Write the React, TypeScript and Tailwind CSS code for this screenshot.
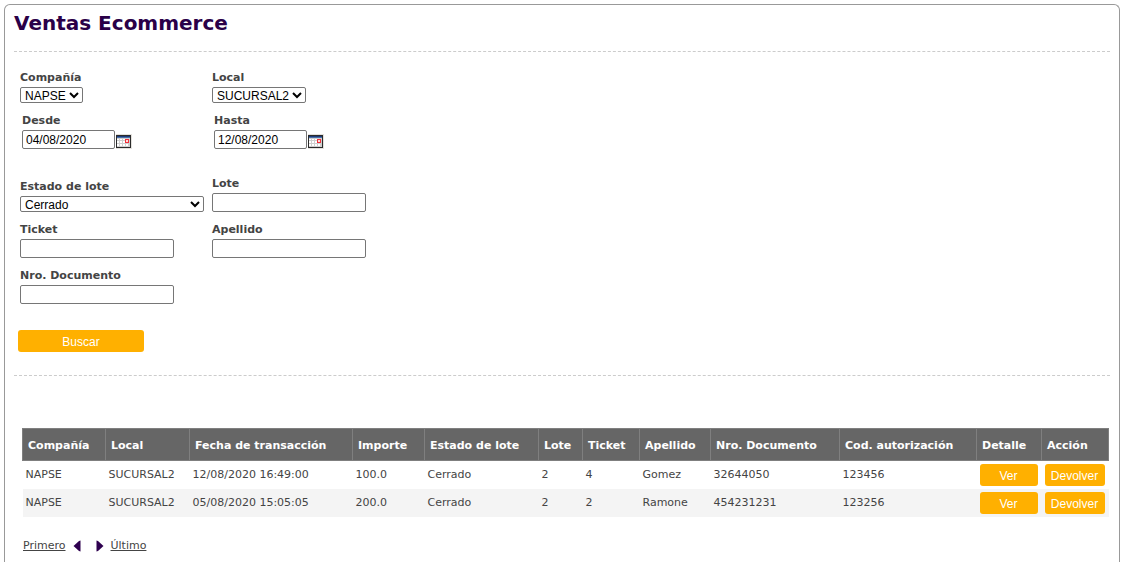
import { useId } from "react";
import type { ReactNode } from "react";
import { clsx } from "clsx";

type Sale = {
  company: string;
  store: string;
  date: string;
  amount: string;
  status: string;
  batch: string;
  ticket: string;
  lastName: string;
  document: string;
  authCode: string;
};

const sales: Sale[] = [
  {
    company: "NAPSE",
    store: "SUCURSAL2",
    date: "12/08/2020 16:49:00",
    amount: "100.0",
    status: "Cerrado",
    batch: "2",
    ticket: "4",
    lastName: "Gomez",
    document: "32644050",
    authCode: "123456",
  },
  {
    company: "NAPSE",
    store: "SUCURSAL2",
    date: "05/08/2020 15:05:05",
    amount: "200.0",
    status: "Cerrado",
    batch: "2",
    ticket: "2",
    lastName: "Ramone",
    document: "454231231",
    authCode: "123256",
  },
];

const columns = [
  { title: "Compañía", width: "w-[83px]" },
  { title: "Local", width: "w-[84px]" },
  { title: "Fecha de transacción", width: "w-[163px]" },
  { title: "Importe", width: "w-[72px]" },
  { title: "Estado de lote", width: "w-[114px]" },
  { title: "Lote", width: "w-[44px]" },
  { title: "Ticket", width: "w-[57px]" },
  { title: "Apellido", width: "w-[71px]" },
  { title: "Nro. Documento", width: "w-[129px]" },
  { title: "Cod. autorización", width: "w-[137px]" },
  { title: "Detalle", width: "w-[65px]" },
  { title: "Acción", width: "w-[67px]" },
];

const controlClass =
  "rounded-[2px] border border-[#767676] bg-white font-['Liberation_Sans',Arial,sans-serif] text-xs text-black";

function Field({ id, label, children }: { id: string; label: string; children: ReactNode }) {
  return (
    <div className="flex flex-col items-start gap-px">
      <label htmlFor={id} className="text-[11px] leading-4 font-bold">
        {label}
      </label>
      {children}
    </div>
  );
}

function SelectField({ label, value, width }: { label: string; value: string; width: string }) {
  const id = useId();
  return (
    <Field id={id} label={label}>
      <select
        id={id}
        defaultValue={value}
        className={clsx(controlClass, "h-4 pb-0.5 leading-3", width)}
      >
        <option>{value}</option>
      </select>
    </Field>
  );
}

function TextField({ label }: { label: string }) {
  const id = useId();
  return (
    <Field id={id} label={label}>
      <input id={id} type="text" className={clsx(controlClass, "h-[19px] w-[154px] px-[3px]")} />
    </Field>
  );
}

function DateField({ label, value }: { label: string; value: string }) {
  const id = useId();
  return (
    <div className="pl-0.5">
      <Field id={id} label={label}>
        <div className="flex items-end gap-px">
          <input
            id={id}
            type="text"
            defaultValue={value}
            className={clsx(controlClass, "h-[19px] w-[93px] px-[3px]")}
          />
          <button type="button" aria-label={`Elegir fecha: ${label}`}>
            <CalendarIcon />
          </button>
        </div>
      </Field>
    </div>
  );
}

function CalendarIcon() {
  return (
    <svg width="16" height="15" viewBox="0 0 16 15" shapeRendering="crispEdges" className="block">
      <rect width="16" height="15" fill="#e4e2de" />
      <rect x="0" y="1" width="15" height="13" fill="#2b2b2b" />
      <rect x="1" y="2" width="13" height="11" fill="#cfcfcf" />
      <rect x="1" y="2" width="13" height="1" fill="#1d3c78" />
      <rect x="1" y="3" width="13" height="1" fill="#4a6ea8" />
      <path
        d="M1 5h2v1h-2zM4 5h2v1h-2zM7 5h2v1h-2zM1 7h2v2h-2zM4 7h2v2h-2zM7 7h2v2h-2zM1 10h2v2h-2zM4 10h2v2h-2zM7 10h2v2h-2zM10 10h2v2h-2z"
        fill="#ffffff"
      />
      <rect x="9.5" y="5.5" width="3" height="3" fill="#ffd9d9" stroke="#f2303a" />
    </svg>
  );
}

function ActionButton({ className, children }: { className?: string; children: ReactNode }) {
  return (
    <button
      type="button"
      className={clsx(
        "block h-[22px] cursor-pointer rounded-[3px] bg-[#ffb000] pt-0.5 font-['Liberation_Sans',Arial,sans-serif] text-xs leading-4 text-white",
        className,
      )}
    >
      {children}
    </button>
  );
}

function SalesTable() {
  return (
    <table className="w-full table-fixed border-collapse text-left text-[11px] leading-[14px]">
      <thead>
        <tr className="h-8 bg-[#666666] text-white">
          {columns.map((column) => (
            <th
              key={column.title}
              scope="col"
              className={clsx(
                "border border-[#7f7f7f] pt-0.5 pl-[5px] font-bold whitespace-nowrap",
                column.width,
              )}
            >
              {column.title}
            </th>
          ))}
        </tr>
      </thead>
      <tbody>
        {sales.map((sale) => (
          <tr key={sale.date} className="h-7 even:bg-[#f4f4f4]">
            {Object.values(sale).map((value, i) => (
              <td key={i} className="pl-[3px] whitespace-nowrap">
                {value}
              </td>
            ))}
            <td className="pr-1 pl-[3px]">
              <ActionButton className="w-full">Ver</ActionButton>
            </td>
            <td className="pr-1 pl-[3px]">
              <ActionButton className="w-full">Devolver</ActionButton>
            </td>
          </tr>
        ))}
      </tbody>
    </table>
  );
}

function Pagination() {
  return (
    <nav aria-label="Paginación" className="flex items-center text-[11px] leading-4">
      <a href="#primero" className="underline">
        Primero
      </a>
      <a href="#anterior" aria-label="Anterior" className="ml-[7px]">
        <svg width="8" height="12" viewBox="0 0 8 12" className="block">
          <path d="M7.5 0.5v11L6 11L0.5 6L6 1z" fill="#2e004f" />
        </svg>
      </a>
      <a href="#siguiente" aria-label="Siguiente" className="ml-[15px]">
        <svg width="8" height="12" viewBox="0 0 8 12" className="block">
          <path d="M0.5 0.5v11L2 11L7.5 6L2 1z" fill="#2e004f" />
        </svg>
      </a>
      <a href="#ultimo" className="ml-[7px] underline">
        Último
      </a>
    </nav>
  );
}

export default function App() {
  return (
    <div className="flex min-h-screen flex-col bg-white pt-1 pr-1.5 pl-1 font-[Verdana,'DejaVu_Sans',sans-serif] text-[#444444]">
      <main className="flex-1 rounded-t-[6px] border border-b-0 border-[#999999] px-[9px] pt-[3px] pb-2">
        <h1 className="text-xl leading-[30px] font-bold text-[#2a0048]">Ventas Ecommerce</h1>

        <form
          className="mt-[13px] border-y border-dashed border-[#cccccc] pt-[18px] pb-[23px]"
          onSubmit={(e) => e.preventDefault()}
        >
          <div className="grid grid-cols-[192px_192px] items-end gap-y-2.5 pl-1.5">
            <SelectField label="Compañía" value="NAPSE" width="w-[63px]" />
            <SelectField label="Local" value="SUCURSAL2" width="w-[94px]" />
            <DateField label="Desde" value="04/08/2020" />
            <DateField label="Hasta" value="12/08/2020" />
          </div>
          <div className="mt-[27px] grid grid-cols-[192px_192px] items-end gap-y-2.5 pl-1.5">
            <SelectField label="Estado de lote" value="Cerrado" width="w-[184px]" />
            <TextField label="Lote" />
            <TextField label="Ticket" />
            <TextField label="Apellido" />
            <TextField label="Nro. Documento" />
          </div>
          <div className="mt-[26px] pl-1">
            <ActionButton className="w-[126px]">Buscar</ActionButton>
          </div>
        </form>

        <div className="mt-[52px] pr-0.5 pl-2">
          <SalesTable />
        </div>
        <div className="mt-[21px] pl-[9px]">
          <Pagination />
        </div>
      </main>
    </div>
  );
}
